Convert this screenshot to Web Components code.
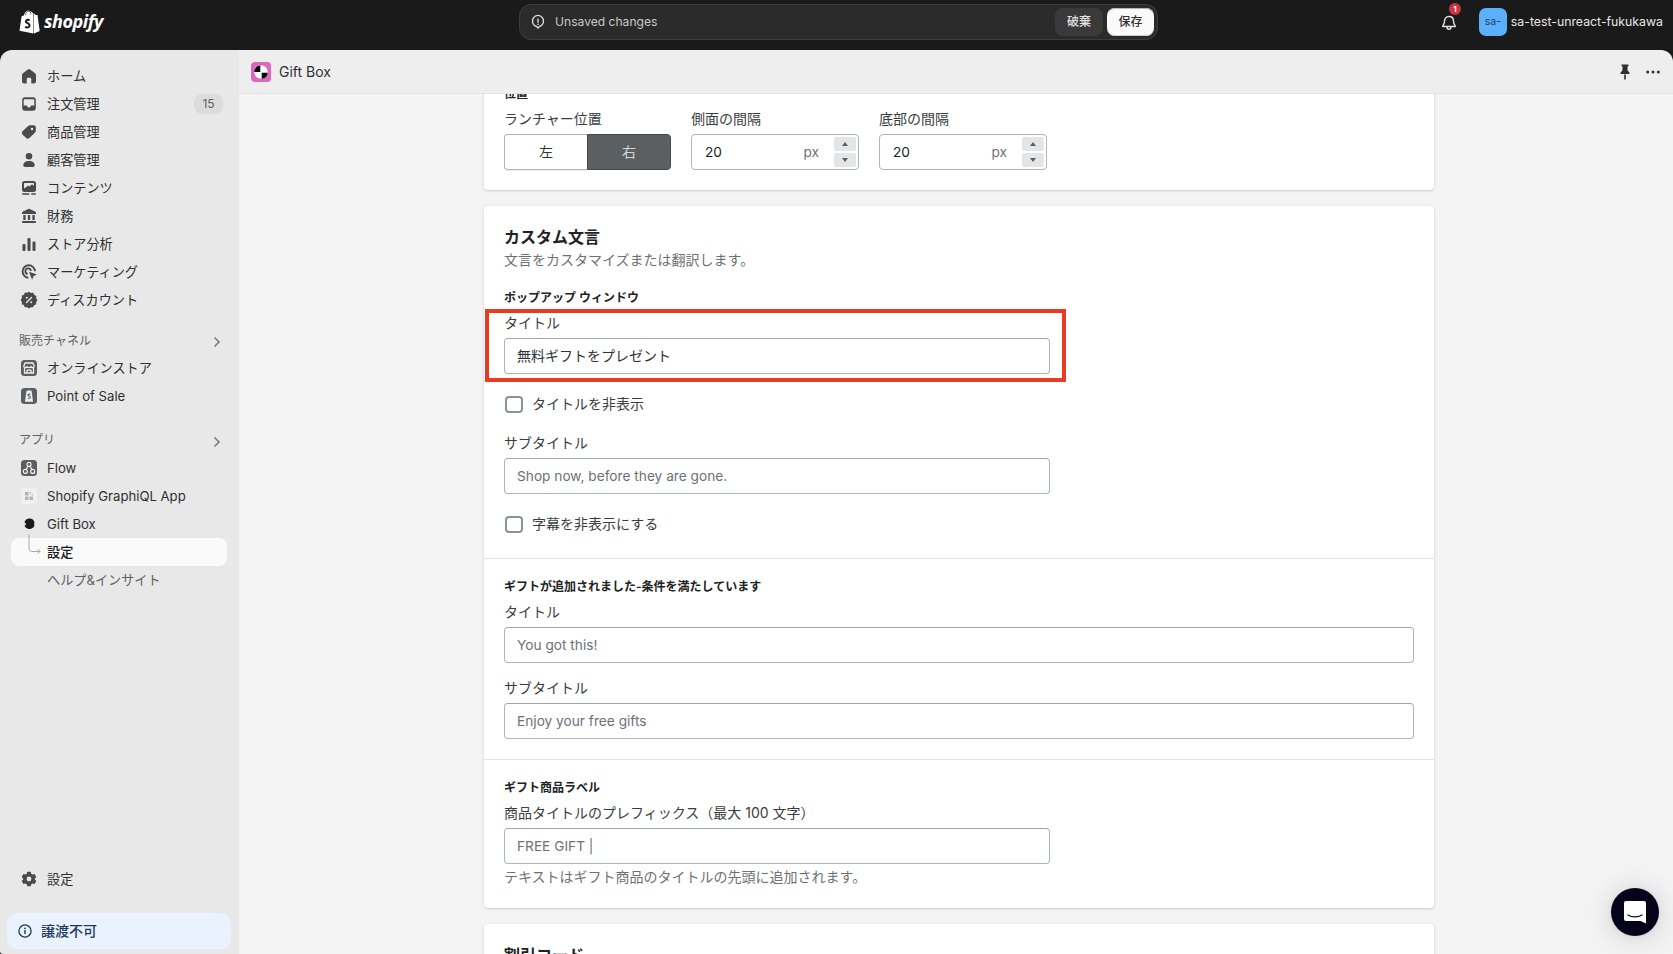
<!DOCTYPE html>
<html lang="ja"><head><meta charset="utf-8"><title>Gift Box</title>
<style>
html,body{margin:0;height:954px;overflow:hidden;background:#1a1a1a}
body{font:14px/20px Inter,"Noto Sans CJK JP",sans-serif;color:#303030;-webkit-font-smoothing:antialiased}
</style></head><body>
<sp-shell>
  <sp-topbar slot="top"></sp-topbar>
  <sp-sidebar slot="side">
    <sp-nav icon="home">ホーム</sp-nav>
    <sp-nav icon="orders" badge="15">注文管理</sp-nav>
    <sp-nav icon="tag">商品管理</sp-nav>
    <sp-nav icon="person">顧客管理</sp-nav>
    <sp-nav icon="content">コンテンツ</sp-nav>
    <sp-nav icon="bank">財務</sp-nav>
    <sp-nav icon="chart">ストア分析</sp-nav>
    <sp-nav icon="target">マーケティング</sp-nav>
    <sp-nav icon="discount">ディスカウント</sp-nav>
    <sp-navhead style="margin-top:12px">販売チャネル</sp-navhead>
    <sp-nav icon="store">オンラインストア</sp-nav>
    <sp-nav icon="pos">Point of Sale</sp-nav>
    <sp-navhead style="margin-top:16px;padding-top:0">アプリ</sp-navhead>
    <sp-nav icon="flow">Flow</sp-nav>
    <sp-nav icon="graphiql">Shopify GraphiQL App</sp-nav>
    <sp-nav icon="gift">Gift Box</sp-nav>
    <sp-nav sub active>設定</sp-nav>
    <sp-nav muted>ヘルプ&amp;インサイト</sp-nav>
    <sp-nav icon="gear" style="margin-top:auto">設定</sp-nav>
    <sp-banner>譲渡不可</sp-banner>
  </sp-sidebar>
  <sp-appbar slot="bar">Gift Box</sp-appbar>
  <sp-page slot="main">
    <sp-card style="margin-top:-28px">
      <sp-section>
        <sp-heading>位置</sp-heading>
        <sp-row>
          <sp-field label="ランチャー位置" style="width:167px;margin:0"><sp-segment></sp-segment></sp-field>
          <sp-field label="側面の間隔" style="width:168px;margin:0"><sp-number value="20"></sp-number></sp-field>
          <sp-field label="底部の間隔" style="width:168px;margin:0"><sp-number value="20"></sp-number></sp-field>
        </sp-row>
      </sp-section>
    </sp-card>
    <sp-card>
      <sp-section first>
        <sp-cardtitle sub="文言をカスタマイズまたは翻訳します。">カスタム文言</sp-cardtitle>
        <sp-heading>ポップアップ ウィンドウ</sp-heading>
        <sp-field label="タイトル" value="無料ギフトをプレゼント" dark narrow callout></sp-field>
        <sp-check>タイトルを非表示</sp-check>
        <sp-field label="サブタイトル" value="Shop now, before they are gone." narrow></sp-field>
        <sp-check>字幕を非表示にする</sp-check>
      </sp-section>
      <sp-section>
        <sp-heading>ギフトが追加されました-条件を満たしています</sp-heading>
        <sp-field label="タイトル" value="You got this!"></sp-field>
        <sp-field label="サブタイトル" value="Enjoy your free gifts"></sp-field>
      </sp-section>
      <sp-section style="padding-bottom:21px">
        <sp-heading>ギフト商品ラベル</sp-heading>
        <sp-field label="商品タイトルのプレフィックス（最大 100 文字）" value="FREE GIFT |" narrow help="テキストはギフト商品のタイトルの先頭に追加されます。"></sp-field>
      </sp-section>
    </sp-card>
    <sp-card>
      <sp-section first><sp-cardtitle>割引コード</sp-cardtitle></sp-section>
    </sp-card>
  </sp-page>
  <sp-chat slot="over"></sp-chat>
</sp-shell>
<script>
const I={
home:'<path fill="#4a4a4a" d="M8.900 3.400a1.800 1.800 0 0 1 2.200 0l5 3.900c.5.400.9 1 .9 1.700v6a2.500 2.500 0 0 1-2.500 2.500h-2.200v-4.200c0-.8-.7-1.500-1.500-1.500H9.200c-.8 0-1.500.7-1.500 1.500V17.500H5.500A2.500 2.500 0 0 1 3 15V9c0-.7.300-1.300.9-1.700z"/>',
orders:'<path fill="#4a4a4a" fill-rule="evenodd" d="M6 3.200h8A2.800 2.800 0 0 1 16.800 6v8a2.800 2.800 0 0 1-2.800 2.800H6A2.800 2.800 0 0 1 3.200 14V6A2.800 2.800 0 0 1 6 3.200zM5.600 5.200a.9.900 0 0 0-.9.900v5.400h2.500c.7 0 1.100.4 1.300 1 .2.600.8 1 1.500 1s1.300-.4 1.500-1c.2-.6.6-1 1.300-1h2.500V6.100a.9.900 0 0 0-.9-.9z"/>',
tag:'<path fill="#4a4a4a" fill-rule="evenodd" d="M11.200 3.200h3.600a2 2 0 0 1 2 2v3.600a2.300 2.300 0 0 1-.7 1.600l-5.700 5.700a2.300 2.300 0 0 1-3.200 0l-3.700-3.700a2.300 2.300 0 0 1 0-3.200l5.700-5.300c.5-.4 1.200-.7 2-.7zM13 5.800a1.200 1.200 0 1 0 0 2.400 1.200 1.200 0 0 0 0-2.400z"/>',
person:'<circle cx="10" cy="6.300" r="3.300" fill="#4a4a4a"/><path fill="#4a4a4a" d="M4.300 15.300c0-2.800 2.600-4.300 5.700-4.300s5.700 1.500 5.700 4.300c0 1-.8 1.700-1.700 1.700H6c-.9 0-1.700-.7-1.700-1.700z"/>',
content:'<path fill="#4a4a4a" fill-rule="evenodd" d="M5.500 3h9A2.500 2.500 0 0 1 17 5.500v6a2.500 2.500 0 0 1-2.500 2.500h-9A2.500 2.500 0 0 1 3 11.500v-6A2.500 2.500 0 0 1 5.500 3zM5 10.500V5.800c0-.5.300-.8.800-.8h8.400c.5 0 .8.300.8.800v2l-2-1.500-2.500 2.200-1.300-1-2.500 2z"/><circle cx="7.800" cy="7.300" r="1" fill="#e8e8e8"/><rect x="3" y="15.300" width="7.500" height="1.500" rx=".7" fill="#4a4a4a"/><rect x="12" y="15.300" width="5" height="1.500" rx=".7" fill="#4a4a4a"/>',
bank:'<path fill="#4a4a4a" d="M9.200 2.900a1.800 1.800 0 0 1 1.600 0l5.200 2.600c.6.300 1 .8 1 1.500v.9H3V7c0-.7.400-1.200 1-1.500z"/><rect x="4.300" y="9" width="2.300" height="5" fill="#4a4a4a"/><rect x="8.850" y="9" width="2.300" height="5" fill="#4a4a4a"/><rect x="13.400" y="9" width="2.300" height="5" fill="#4a4a4a"/><rect x="3" y="15" width="14" height="2" rx=".7" fill="#4a4a4a"/>',
chart:'<rect x="3.500" y="10" width="3" height="7" rx="1" fill="#4a4a4a"/><rect x="8.500" y="4" width="3" height="13" rx="1" fill="#4a4a4a"/><rect x="13.500" y="7.500" width="3" height="9.500" rx="1" fill="#4a4a4a"/>',
target:'<path fill="none" stroke="#4a4a4a" stroke-width="1.900" d="M9.300 15.700A6.200 6.200 0 1 1 16 9.300"/><path fill="none" stroke="#4a4a4a" stroke-width="1.800" d="M8.600 12a2.800 2.800 0 1 1 3.300-3.200"/><path fill="#4a4a4a" d="M10 9.800l8 2.800-3.400 1.400-1.500 3.800z"/>',
discount:'<path fill="#4a4a4a" d="M10 2.300l2 1.400 2.400-.2 1 2.200 2.200 1-.2 2.400 1.300 1.900-1.300 2 0 2.300-2.200 1-1 2.200-2.300-.1-1.900 1.200-1.900-1.300-2.400.1-1-2.200-2.200-1 .2-2.300L1.400 10.800l1.300-2-.1-2.400 2.200-1 1-2.200 2.400.2z" transform="translate(.3 -.6) scale(.97)"/><path stroke="#e8e8e8" stroke-width="1.400" fill="none" stroke-linecap="round" d="M12.500 7.500l-5 5"/><circle cx="7.800" cy="7.800" r="1" fill="#e8e8e8"/><circle cx="12.200" cy="12.200" r="1" fill="#e8e8e8"/>',
store:'<rect x="2" y="2" width="16" height="16" rx="3.500" fill="#5c5f62"/><path fill="none" stroke="#f0f0f0" stroke-width="1.300" stroke-linejoin="round" d="M6 5h8l1.200 3.200c0 1-.9 1.400-1.700 1.400S12 9 12 8.500c0 .5-.9 1.100-2 1.100s-2-.6-2-1.100c0 .5-.7 1.100-1.500 1.100s-1.700-.4-1.700-1.400zM5.500 10v5h9v-5M8 15v-2.800h4V15"/>',
pos:'<rect x="2" y="2" width="16" height="16" rx="3.500" fill="#5c5f62"/><path fill="#f0f0f0" d="M7.500 4.700h2.200c.2-1 1.400-1 1.600 0h1.300L14 15.800H6z"/><path fill="none" stroke="#5c5f62" stroke-width="1.100" d="M11.400 8.400c-1-.6-2.400-.3-2.400.6 0 1.300 2.400.9 2.400 2.300 0 1-1.500 1.300-2.500.7"/>',
flow:'<rect x="2" y="2" width="16" height="16" rx="3.500" fill="#5c5f62"/><g fill="none" stroke="#f0f0f0" stroke-width="1.200"><circle cx="10" cy="6.400" r="2"/><circle cx="6.300" cy="13.400" r="2"/><circle cx="13.700" cy="13.400" r="2"/><path d="M9 8.200l-2 3.400M11 8.200l2 3.400"/></g>',
graphiql:'<rect x="2" y="2" width="16" height="16" rx="3.500" fill="#f0f0f0"/><g fill="#b4b4b4"><rect x="6" y="6" width="3.500" height="3.500"/><rect x="6" y="10.500" width="3.500" height="3.500"/><rect x="10.500" y="10.500" width="3.500" height="3.500"/><rect x="10.500" y="6" width="1.400" height="1.400"/><rect x="12.600" y="8" width="1.400" height="1.400"/></g>',
gift:'<path fill="#1a1a1a" d="M10.700 4.600a5.400 5.400 0 0 1 4.800 3.900c-.5.900-.5 2.200 0 3.100a5.400 5.400 0 0 1-10.100 0c.9-.2 1.500-.8 1.500-1.600s-.6-1.400-1.500-1.600a5.400 5.400 0 0 1 5.300-3.800z"/>',
gear:'<path fill="#4a4a4a" fill-rule="evenodd" d="M8.300 2.800h3.400l.5 2 1.400.8 2-.6 1.700 3-1.500 1.400v1.200l1.500 1.400-1.700 3-2-.6-1.400.8-.5 2H8.300l-.5-2-1.400-.8-2 .6-1.700-3 1.500-1.400V9.400L2.700 8l1.700-3 2 .6 1.400-.8zM10 7.600a2.400 2.400 0 1 0 0 4.800 2.400 2.400 0 0 0 0-4.800z"/>'
};
function def(name,html,init){
  customElements.define(name,class extends HTMLElement{
    connectedCallback(){
      if(this.shadowRoot)return;
      const s=this.attachShadow({mode:'open'});
      s.innerHTML=typeof html==='function'?html(this):html;
      if(init)init(this,s);
    }
  });
}
const esc=t=>String(t||'');
def('sp-shell',`<style>
:host{display:grid;grid-template-columns:239px 1fr;grid-template-rows:50px 44px 860px;height:954px;position:relative;overflow:hidden}
.top{grid-column:1/3;grid-row:1}
.side{grid-column:1;grid-row:2/4;display:flex;min-height:0}
.bar{grid-column:2;grid-row:2;display:flex}
.main{grid-column:2;grid-row:3;display:flex;min-height:0;overflow:hidden}
::slotted(*){flex:1}
</style>
<div class="top"><slot name="top"></slot></div>
<div class="side"><slot name="side"></slot></div>
<div class="bar"><slot name="bar"></slot></div>
<div class="main"><slot name="main"></slot></div>
<slot name="over"></slot>`);
def('sp-topbar',`<style>
:host{display:grid;grid-template-columns:519px 639px 1fr;height:50px;box-sizing:border-box;padding-bottom:6px;align-items:center;color:#e3e3e3;font-size:13px}
.logo{display:flex;align-items:center;padding-left:19px;gap:4px}
.word{font:italic 700 18px/24px "Open Sans",sans-serif;color:#fff;letter-spacing:-.45px;margin-top:-2px}
.save{height:36px;box-sizing:border-box;border:1px solid #3d3d3d;border-radius:12px;background:#2b2b2b;display:flex;align-items:center;padding:0 3px 0 10px;gap:9px;font-size:12.100px;color:#c8c8c8}
.save span{flex:1}
.btn{height:28px;border-radius:8px;display:flex;align-items:center;justify-content:center;font-size:12px;font-weight:500}
.discard{width:48px;background:#3a3a3a;color:#e3e3e3}
.ok{width:47px;background:#fafafa;color:#303030;box-shadow:0 1px 0 #b5b5b5 inset,0 -1px 0 #ccc inset;margin-left:-5px}
.right{display:flex;align-items:center;justify-content:flex-end;padding-right:10px;font-size:12.300px;color:#e6e6e6}
.bell{position:relative;width:20px;height:20px;margin-right:20px;margin-top:1px}
.dot{position:absolute;left:10px;top:-10px;width:12px;height:12px;border-radius:50%;background:#cc3340;color:#fff;font:700 8px/12px Inter,sans-serif;text-align:center}
.av{width:28px;height:28px;border-radius:7px;background:#5bb0fb;color:#1c3f63;font-size:10.500px;line-height:28px;text-align:center;margin-right:4px}
</style>
<div class="logo">
<svg width="21" height="24" viewBox="0 0 21 24"><path fill="#fff" d="M0.500 20.700L2.600 6.300l2.200-.7C5.500 2.800 7.200.500 9.300.500c.8 0 1.400.3 1.800.9l.2 0c1.700 0 2.500 1 2.900 2.300l.3-.1v20L0.500 20.700z"/><path fill="#fff" d="M15 3.300l1.600 1.600 1.900.2L20.700 21 15 23.500z"/><path fill="none" stroke="#1a1a1a" stroke-width=".7" d="M6.300 5.200C6.600 3 7.800 1.300 9.500 1.300c1.600 0 2.500 1.500 2.500 3"/><path fill="none" stroke="#1a1a1a" stroke-width="2" d="M10.600 10.300c-1.700-.9-3.700-.4-3.700 1.100 0 1.900 3.700 1.800 3.700 4 0 2.100-2.700 2.700-4.400 1.500"/></svg>
<span class="word">shopify</span></div>
<div class="save">
<svg width="16" height="16" viewBox="0 0 16 16"><path fill="none" stroke="#e3e3e3" stroke-width="1.300" d="M8 14l-1.600-1.600A5.600 5.600 0 1 1 9.600 12.400z"/><rect x="7.350" y="4.500" width="1.300" height="4.300" rx=".6" fill="#e3e3e3"/><circle cx="8" cy="10.300" r=".8" fill="#e3e3e3"/></svg>
<span>Unsaved changes</span><div class="btn discard">破棄</div><div class="btn ok">保存</div></div>
<div class="right">
<div class="bell"><svg width="20" height="20" viewBox="0 0 20 20"><path fill="none" stroke="#e3e3e3" stroke-width="1.400" stroke-linejoin="round" d="M10 3.500c-3 0-4.500 2.200-4.500 4.700 0 2.800-1.800 4.600-1.800 5.300h12.600c0-.7-1.800-2.500-1.800-5.300 0-2.500-1.500-4.700-4.500-4.700zM8 13.700c0 3.400 4 3.400 4 0"/></svg><div class="dot">1</div></div>
<div class="av">sa-</div><span>sa-test-unreact-fukukawa</span></div>`);
def('sp-sidebar',`<style>
:host{display:flex;flex-direction:column;background:#e8e8e8;border-top-left-radius:12px;border-bottom-left-radius:3px;padding:12px 0 5px;box-sizing:border-box;height:904px;font-size:13.150px}
</style><slot></slot>`);
def('sp-nav',el=>{
  const b=el.getAttribute('badge'),ic=el.getAttribute('icon');
  return `<style>
:host{display:flex;align-items:center;height:28px;margin:0 12px 0 11px;padding:0 4px 0 8px;gap:8px;box-sizing:border-box;border-radius:8px;color:#303030;position:relative;flex:none}
:host([active]){background:#fafafa;color:#1a1a1a;font-weight:500}
:host([muted]){color:#616161}
.ic{width:20px;height:20px;flex:none}
svg{display:block}
span{flex:1;white-space:nowrap}
.b{flex:none;width:29px;height:20px;border-radius:8px;background:#dcdcdc;text-align:center;font-size:12px;line-height:20px;color:#616161}
.hook{position:absolute;left:17px;top:-4px}
</style><div class="ic">${ic?`<svg width="20" height="20" viewBox="0 0 20 20">${I[ic]}</svg>`:''}</div><span><slot></slot></span>${b?`<div class="b">${b}</div>`:''}${el.hasAttribute('sub')?'<svg class="hook" width="14" height="24" viewBox="0 0 14 24"><path fill="none" stroke="#a8a8a8" stroke-width="1" d="M1 0v14.500a3 3 0 0 0 3 3h8M9.500 15l2.500 2.500-2.500 2.500"/></svg>':''}`;
});
def('sp-navhead',`<style>
:host{display:flex;align-items:center;justify-content:space-between;height:28px;box-sizing:border-box;padding:1px 18px 0 19px;font-size:12px;color:#616161;flex:none}
svg{margin-top:3px}
</style><slot></slot><svg width="8" height="12" viewBox="0 0 8 12"><path fill="none" stroke="#6d6d6d" stroke-width="1.400" d="M1.500 1.500L6 6l-4.500 4.500"/></svg>`);
def('sp-banner',`<style>
:host{display:flex;align-items:center;height:36px;margin:20px 8px 0 7px;padding:0 0 0 11px;gap:9px;border-radius:10px;background:#e9f2fe;color:#1c3a5c;font-size:14px;font-weight:500;flex:none}
svg{flex:none}
</style><svg width="14" height="14" viewBox="0 0 14 14"><circle cx="7" cy="7" r="6.100" fill="none" stroke="#1c3a5c" stroke-width="1.300"/><rect x="6.300" y="6" width="1.400" height="4.200" rx=".6" fill="#1c3a5c"/><circle cx="7" cy="4.300" r=".9" fill="#1c3a5c"/></svg><slot></slot>`);
def('sp-appbar',`<style>
:host{display:flex;align-items:center;height:44px;background:#eeeeee;border-bottom:1px solid #e3e3e3;box-sizing:border-box;padding:0 12px 0 12px;font-size:14px;color:#303030;border-top-right-radius:12px}
.a{display:block;margin-right:8px}
span{flex:1}
.r{display:block;margin-right:12px}
</style><svg class="a" width="20" height="20" viewBox="0 0 20 20"><rect width="20" height="20" rx="4" fill="#dc67bc"/><circle cx="10" cy="10" r="6.800" fill="#fff"/><path d="M10 3.200A6.800 6.800 0 0 0 3.200 10h6.100V3.200zM10.700 10.700v6.100A6.800 6.800 0 0 0 16.800 10.700z" fill="#000"/></svg><span><slot></slot></span>
<svg class="r" width="16" height="18" viewBox="0 0 16 18"><path fill="#303030" d="M4.500 1.500h7v1.300l-1 1v3.500l2 2.500v1.200H3.500V9.800l2-2.500V3.800l-1-1zM7.200 11.500h1.600V16L8 17l-.8-1z"/></svg>
<svg width="16" height="16" viewBox="0 0 16 16"><circle cx="2.700" cy="8" r="1.500" fill="#303030"/><circle cx="8" cy="8" r="1.500" fill="#303030"/><circle cx="13.300" cy="8" r="1.500" fill="#303030"/></svg>`);
def('sp-page',`<style>
:host{display:block;background:#f4f4f4;padding-left:245px;overflow:hidden;min-width:0}
.w{width:950px;display:flex;flex-direction:column;gap:16px}
</style><div class="w"><slot></slot></div>`);
def('sp-card',`<style>
:host{display:block;background:#fff;border-radius:0 0 4px 4px;box-shadow:0 0 5px rgba(23,24,24,.05),0 1px 2px rgba(0,0,0,.15);flex:none}
:host(:not(:first-child)){border-radius:4px}
::slotted(sp-section:not(:first-child)){border-top:1px solid #e1e3e5}
</style><slot></slot>`);
def('sp-section',`<style>
:host{display:flex;flex-direction:column;padding:19px 20px 20px;gap:0}
:host([first]){padding-top:19px;padding-bottom:24px}
</style><slot></slot>`);
def('sp-cardtitle',el=>`<style>
:host{display:block;margin-bottom:19px}
.t{font-size:16px;line-height:24px;font-weight:600;color:#202223}
.s{font-size:14px;line-height:20px;margin-top:1px;color:#6d7175}
</style><div class="t"><slot></slot></div>${el.getAttribute('sub')?`<div class="s">${el.getAttribute('sub')}</div>`:''}`);
def('sp-heading',`<style>
:host{display:block;font-size:12px;line-height:16px;font-weight:600;color:#202223;padding-top:1px;margin-bottom:7px}
</style><slot></slot>`);
def('sp-row',`<style>:host{display:flex;gap:20px}</style><slot></slot>`);
def('sp-field',el=>{
  const v=el.getAttribute('value');
  const h=el.getAttribute('help');
  return `<style>
:host{display:block;position:relative;margin-bottom:15px;flex:none}
:host(:last-child){margin-bottom:0}
:host([narrow]) .box, :host([narrow]) .help{width:546px}
.l{display:block;font-size:14px;line-height:20px;color:#3a3d40;margin-bottom:5px;white-space:nowrap}
.box{height:36px;box-sizing:border-box;border:1px solid #aeb4b9;border-top-color:#a0a5aa;border-radius:4px;padding:0 12px;font-size:13.700px;line-height:34px;color:#6d7175;white-space:nowrap}
:host([dark]) .box{color:#303336;font-size:14px}
.help{font-size:14px;line-height:20px;color:#6d7175;margin-top:3px}
.call{position:absolute;left:-19px;top:-4px;width:581px;height:73px;border:4px solid #e93a23;box-sizing:border-box;pointer-events:none}
</style><span class="l">${el.getAttribute('label')}</span>${v!==null?`<div class="box">${esc(v)}</div>`:'<slot></slot>'}${h?`<div class="help">${h}</div>`:''}${el.hasAttribute('callout')?'<div class="call"></div>':''}`;
});
def('sp-check',`<style>
:host{display:flex;align-items:center;height:20px;gap:9px;margin:5px 0 19px;font-size:14px;color:#3a3d40;flex:none}
:host(:last-child){margin-bottom:0}
i{display:block;width:18px;height:17px;box-sizing:border-box;border:2px solid #8c9196;border-radius:4px;margin-left:1px}
</style><i></i><slot></slot>`);
def('sp-segment',`<style>
:host{display:flex;height:36px}
div{flex:1;display:flex;align-items:center;justify-content:center;font-size:14px;box-sizing:border-box;border:1px solid #aeb4b9}
.a{border-radius:4px 0 0 4px;border-right:0;color:#303336;box-shadow:0 1px 0 rgba(0,0,0,.08)}
.b{border-radius:0 4px 4px 0;background:#5c5f62;color:#d6d6d6;border-color:#43464a}
</style><div class="a">左</div><div class="b">右</div>`);
def('sp-number',el=>`<style>
:host{display:flex;align-items:center;height:36px;box-sizing:border-box;border:1px solid #aeb4b9;border-radius:4px;padding:0 2px 0 13px;font-size:13.700px;color:#202223}
.v{flex:1}
.u{color:#6d7175;margin-right:15px}
.s{display:flex;flex-direction:column;gap:2px}
.s b{display:flex;width:22px;height:14px;background:#e4e5e7;border-radius:2px;align-items:center;justify-content:center}
</style><span class="v">${el.getAttribute('value')}</span><span class="u">px</span><div class="s"><b><svg width="6" height="4" viewBox="0 0 6 4"><path d="M3 0l3 4H0z" fill="#5c5f62"/></svg></b><b><svg width="6" height="4" viewBox="0 0 6 4"><path d="M3 4L0 0h6z" fill="#5c5f62"/></svg></b></div>`);
def('sp-chat',`<style>
:host{position:absolute;left:1611px;top:888px;width:48px;height:48px;border-radius:50%;background:#05031a;box-shadow:0 1px 6px rgba(0,0,0,.06),0 2px 32px rgba(0,0,0,.16);display:flex;align-items:center;justify-content:center}
</style><svg width="24" height="24" viewBox="0 0 24 24"><path fill="#fff" d="M3 1h18a2 2 0 0 1 2 2v20.500L17.500 21H3a2 2 0 0 1-2-2V3a2 2 0 0 1 2-2z"/><path fill="none" stroke="#05031a" stroke-width="1.300" stroke-linecap="round" d="M5 15c4 2.600 10 2.600 14 0"/></svg>`);
</script>
</body></html>
